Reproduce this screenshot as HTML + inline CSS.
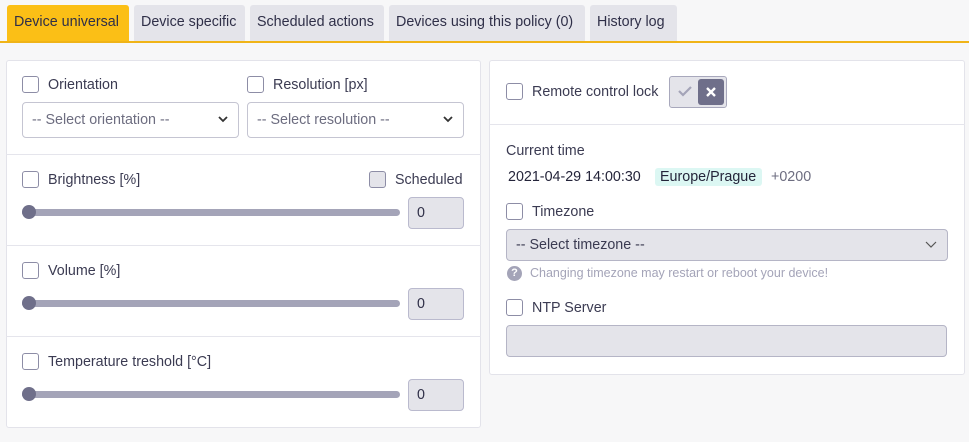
<!DOCTYPE html>
<html><head><style>
*{box-sizing:border-box;margin:0;padding:0}
body{width:969px;height:442px;background:#f7f7f8;font-family:"Liberation Sans",sans-serif;font-size:14.3px;color:#3b3b52;position:relative;overflow:hidden}
.a{position:absolute}
.tab{position:absolute;top:5px;height:36px;background:#e4e4ea;border-radius:3px 3px 0 0;line-height:35px;padding:0 7px;font-size:14.3px;color:#2f2f48;white-space:nowrap;overflow:hidden}
.card{position:absolute;background:#fff;border:1px solid #e3e3ea;border-radius:3px}
.hr{position:absolute;height:1px;background:#e5e5ec}
.cb{position:absolute;width:17px;height:17px;border:1px solid #8d8da6;border-radius:3px;background:#fff}
.lbl{position:absolute;line-height:19px;white-space:nowrap}
.sel{position:absolute;height:36px;border:1px solid #c5c5d2;border-radius:4px;line-height:34px;padding-left:9px;color:#6d6d80}
.sel svg{position:absolute;right:10px;top:13px}
.track{position:absolute;height:7px;background:#a4a4b8;border-radius:4px}
.knob{position:absolute;width:14px;height:14px;background:#6f6f8a;border-radius:50%}
.num{position:absolute;width:56px;height:32px;background:#e4e4ea;border:1px solid #babace;border-radius:4px;line-height:30px;padding-left:8px;color:#2f2f48}
</style></head><body>
<div class="tab" style="left:7px;width:122px;background:#fbbf16">Device universal</div>
<div class="tab" style="left:134px;width:111px">Device specific</div>
<div class="tab" style="left:250px;width:134px">Scheduled actions</div>
<div class="tab" style="left:389px;width:196px">Devices using this policy (0)</div>
<div class="tab" style="left:590px;width:87px">History log</div>
<div class="a" style="left:0;top:41px;width:969px;height:2px;background:#f0b418"></div>

<div class="card" style="left:6px;top:60px;width:475px;height:368px"></div>
<div class="cb" style="left:22px;top:76px"></div><div class="lbl" style="left:48px;top:76px">Orientation</div>
<div class="cb" style="left:247px;top:76px"></div><div class="lbl" style="left:273px;top:76px">Resolution [px]</div>
<div class="sel" style="left:22px;top:102px;width:217px">-- Select orientation --<svg width="10" height="7"><path d="M1 1l4 4 4-4" stroke="#333" stroke-width="1.8" fill="none"/></svg></div>
<div class="sel" style="left:247px;top:102px;width:217px">-- Select resolution --<svg width="10" height="7"><path d="M1 1l4 4 4-4" stroke="#333" stroke-width="1.8" fill="none"/></svg></div>
<div class="hr" style="left:6px;top:154px;width:475px"></div>

<div class="cb" style="left:22px;top:171px"></div><div class="lbl" style="left:48px;top:171px">Brightness [%]</div>
<div class="cb" style="left:369px;top:171px;background:#e4e4ea"></div><div class="lbl" style="left:395px;top:171px">Scheduled</div>
<div class="track" style="left:22px;top:209px;width:378px"></div><div class="knob" style="left:22px;top:205px"></div>
<div class="num" style="left:408px;top:197px">0</div>
<div class="hr" style="left:6px;top:245px;width:475px"></div>

<div class="cb" style="left:22px;top:262px"></div><div class="lbl" style="left:48px;top:262px">Volume [%]</div>
<div class="track" style="left:22px;top:300px;width:378px"></div><div class="knob" style="left:22px;top:296px"></div>
<div class="num" style="left:408px;top:288px">0</div>
<div class="hr" style="left:6px;top:336px;width:475px"></div>

<div class="cb" style="left:22px;top:353px"></div><div class="lbl" style="left:48px;top:353px">Temperature treshold [°C]</div>
<div class="track" style="left:22px;top:391px;width:378px"></div><div class="knob" style="left:22px;top:387px"></div>
<div class="num" style="left:408px;top:379px">0</div>

<div class="card" style="left:489px;top:60px;width:476px;height:315px"></div>
<div class="cb" style="left:506px;top:83px"></div><div class="lbl" style="left:532px;top:83px">Remote control lock</div>
<div class="a" style="left:669px;top:76px;width:58px;height:32px;background:#e4e4ea;border:1px solid #a8a8bc;border-radius:3px"></div>
<div class="a" style="left:677px;top:84px"><svg width="16" height="14"><path d="M2 7l4 4 8-8" stroke="#a4a4b8" stroke-width="2.2" fill="none"/></svg></div>
<div class="a" style="left:698px;top:79px;width:26px;height:26px;background:#6f6f8a;border-radius:3px"><svg width="26" height="26"><path d="M9 9l8 8M17 9l-8 8" stroke="#fff" stroke-width="2.4"/></svg></div>
<div class="hr" style="left:489px;top:124px;width:476px"></div>

<div class="lbl" style="left:506px;top:142px">Current time</div>
<div class="lbl" style="left:508px;top:168px;color:#24243a">2021-04-29 14:00:30</div>
<div class="a" style="left:655px;top:168px;width:107px;height:18px;background:#dcf7f3;border-radius:3px;line-height:18px;padding-left:5px;color:#24243a;white-space:nowrap">Europe/Prague</div>
<div class="lbl" style="left:771px;top:168px;color:#6d6d80">+0200</div>
<div class="cb" style="left:506px;top:203px"></div><div class="lbl" style="left:532px;top:203px">Timezone</div>
<div class="sel" style="left:506px;top:229px;width:442px;height:32px;line-height:30px;background:#e4e4ea;border-color:#b5b5c6;color:#3b3b52">-- Select timezone --<svg width="12" height="7" style="top:11px"><path d="M1 1l5 5 5-5" stroke="#555" stroke-width="1.2" fill="none"/></svg></div>
<div class="a" style="left:507px;top:266px;width:15px;height:15px;border-radius:50%;background:#a4a4b8;color:#fff;font-size:11px;font-weight:bold;text-align:center;line-height:15px">?</div>
<div class="lbl" style="left:530px;top:264px;font-size:12.5px;color:#a4a4b8">Changing timezone may restart or reboot your device!</div>
<div class="cb" style="left:506px;top:299px"></div><div class="lbl" style="left:532px;top:299px">NTP Server</div>
<div class="a" style="left:506px;top:325px;width:441px;height:32px;background:#e4e4ea;border:1px solid #b5b5c6;border-radius:4px"></div>
</body></html>
